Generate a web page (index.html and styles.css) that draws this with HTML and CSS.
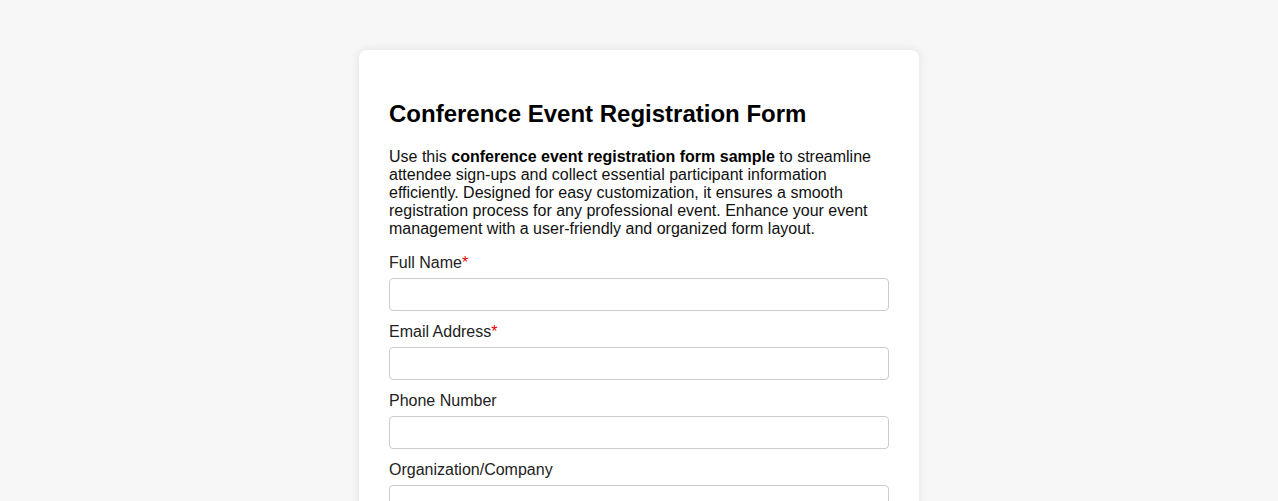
FILE: index.html
```html
<!DOCTYPE html>
<html>
<head>
<meta charset="utf-8">
<link rel="stylesheet" href="styles.css">
</head>
<body>
<div class="card">
  <h2 class="title">Conference Event Registration Form</h2>
  <p class="intro">Use this <strong>conference event registration form sample</strong> to streamline attendee sign-ups and collect essential participant information efficiently. Designed for easy customization, it ensures a smooth registration process for any professional event. Enhance your event management with a user-friendly and organized form layout.</p>
  <form class="form">
    <label class="label">Full Name<span class="req">*</span></label>
    <input class="input" type="text">
    <label class="label">Email Address<span class="req">*</span></label>
    <input class="input" type="email">
    <label class="label">Phone Number</label>
    <input class="input" type="tel">
    <label class="label">Organization/Company</label>
    <input class="input" type="text">
  </form>
</div>
</body>
</html>
```
FILE: styles.css
```css
html, body {
  margin: 0;
  padding: 0;
  background: #f7f7f7;
  font-family: "Liberation Sans", Arial, sans-serif;
  color: #222;
}
.card {
  width: 500px;
  margin: 50px auto 0;
  padding: 30px;
  background: #fff;
  border-radius: 8px;
  box-shadow: 0 0 10px rgba(0,0,0,0.1);
}
.title {
  font-size: 24px;
  font-weight: bold;
  color: #000;
  margin: 20px 0 20px;
  line-height: 28px;
}
.intro {
  font-size: 16px;
  line-height: 18px;
  margin: 0 0 16px;
  color: #111;
}
.intro strong { color: #000; }
.form {
  display: flex;
  flex-direction: column;
}
.label {
  display: block;
  font-size: 16px;
  line-height: 18px;
  margin-bottom: 6px;
}
.req { color: #e00; }
.input {
  box-sizing: border-box;
  width: 500px;
  height: 33px;
  margin: 0 0 12px;
  border: 1px solid #ccc;
  border-radius: 4px;
  padding: 6px 8px;
  font-size: 16px;
  background: #fff;
}
```
